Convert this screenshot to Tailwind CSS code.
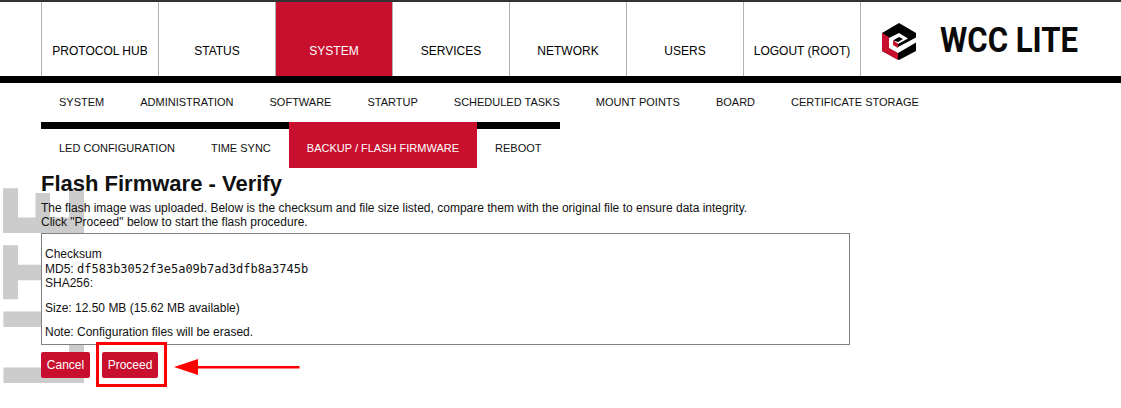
<!DOCTYPE html>
<html>
<head>
<meta charset="utf-8">
<script src="https://cdn.jsdelivr.net/npm/@tailwindcss/browser@4"></script>
</head>
<body class="relative h-[408px] w-[1121px] overflow-hidden bg-white font-['Liberation_Sans',Arial,sans-serif] text-black">
  <!-- watermark -->
  <div class="absolute left-[5px] top-[388px] origin-top-left font-['Roboto',sans-serif] text-[114px] leading-[81px] font-black whitespace-nowrap text-[#cccccc] h-[81px] tracking-[7px] [transform:rotate(-90deg)_scaleX(0.8)]" aria-hidden="true">LITE</div>

  <div class="relative">
    <header class="h-[83px] border-t-2 border-b-7 border-t-[#333333] border-b-black flex pl-[41px]">
      <nav class="flex text-[12px] border-r border-[#b3b3b3]">
        <a class="w-[117px] border-l border-[#b3b3b3] flex items-center justify-center pt-[24px]">PROTOCOL HUB</a>
        <a class="w-[117px] border-l border-[#b3b3b3] flex items-center justify-center pt-[24px]">STATUS</a>
        <a class="w-[117px] border-l border-[#b3b3b3] flex items-center justify-center pt-[24px] bg-[#c8102e] text-white">SYSTEM</a>
        <a class="w-[117px] border-l border-[#b3b3b3] flex items-center justify-center pt-[24px]">SERVICES</a>
        <a class="w-[117px] border-l border-[#b3b3b3] flex items-center justify-center pt-[24px]">NETWORK</a>
        <a class="w-[117px] border-l border-[#b3b3b3] flex items-center justify-center pt-[24px]">USERS</a>
        <a class="w-[117px] border-l border-[#b3b3b3] flex items-center justify-center pt-[24px]">LOGOUT (ROOT)</a>
      </nav>
      <div class="flex items-start pl-[20px] pt-[20px]">
        <svg width="36" height="38" viewBox="881 21 36 38" class="shrink-0">
          <polygon points="899,22 916,32 916,50 899,59 882,50 882,32" fill="#000"/>
          <polygon points="882,32 889,36 889,47 898,52 898,59 882,50" fill="#c8102e"/>
          <polygon points="889,37 899,32 908,37.500 898,43 898,46 916,36.500 916,41.500 898,52 889,47" fill="#fff"/>
          <polygon points="893,39.500 898,42.500 898,47 893,44" fill="#c8102e"/>
          <polygon points="893,39.500 899,36 903,38 898,41" fill="#000"/>
        </svg>
        <span class="ml-[23px] mt-[-6px] origin-left scale-x-[0.89] font-['Roboto',sans-serif] font-bold text-[35px] leading-[50px] text-[#0a0a0a] whitespace-nowrap">WCC LITE</span>
      </div>
    </header>

    <nav class="h-[39px] pl-[41px] flex items-center text-[11px] text-[#111]">
      <a class="px-[18px]">SYSTEM</a>
      <a class="px-[18px]">ADMINISTRATION</a>
      <a class="px-[18px]">SOFTWARE</a>
      <a class="px-[18px]">STARTUP</a>
      <a class="px-[18px]">SCHEDULED TASKS</a>
      <a class="px-[18px]">MOUNT POINTS</a>
      <a class="px-[18px]">BOARD</a>
      <a class="px-[18px]">CERTIFICATE STORAGE</a>
    </nav>

    <div class="pl-[41px]">
      <nav class="w-[519px] h-[46px] border-t-7 border-black flex text-[11px] text-[#111]">
        <a class="px-[18px] flex items-center">LED CONFIGURATION</a>
        <a class="px-[18px] flex items-center">TIME SYNC</a>
        <a class="px-[18px] flex items-center -mt-[7px] pt-[7px] bg-[#c8102e] text-white">BACKUP / FLASH FIRMWARE</a>
        <a class="px-[18px] flex items-center">REBOOT</a>
      </nav>

      <h1 class="mt-[3px] text-[22px] leading-[25px] font-bold text-[#111]">Flash Firmware - Verify</h1>
      <p class="mt-[5px] text-[12px] leading-[14px] text-[#111]">The flash image was uploaded. Below is the checksum and file size listed, compare them with the original file to ensure data integrity.<br>Click "Proceed" below to start the flash procedure.</p>

      <div class="relative mt-[4px] h-[112px] w-[809px] border border-[#808080] bg-white px-[3px] pt-[13px] text-[12px] leading-[14.500px] text-[#111]">
        <p>Checksum<br>MD5: <code class="font-['DejaVu_Sans_Mono',monospace]">df583b3052f3e5a09b7ad3dfb8a3745b</code><br>SHA256:</p>
        <p class="mt-[10px]">Size: 12.50 MB (15.62 MB available)</p>
        <p class="mt-[10px]">Note: Configuration files will be erased.</p>
      </div>

      <div class="relative mt-[7px] flex gap-[12px] text-[12px] text-white">
        <button class="h-[26px] w-[49px] rounded-[2px] bg-[#c8102e] text-center">Cancel</button>
        <button class="h-[26px] w-[56px] rounded-[2px] bg-[#c8102e] text-center">Proceed</button>
        <div class="absolute left-[55px] top-[-10px] h-[45px] w-[71px] border-[3px] border-[#ff0000]"></div>
        <svg class="absolute left-[133px] top-[0px]" width="126" height="26" viewBox="0 0 126 26">
          <polygon points="0,15 24,7 24,23" fill="#ff0000"/>
          <rect x="20" y="14" width="105.500" height="2.500" fill="#ff0000"/>
        </svg>
      </div>
    </div>
  </div>
</body>
</html>
